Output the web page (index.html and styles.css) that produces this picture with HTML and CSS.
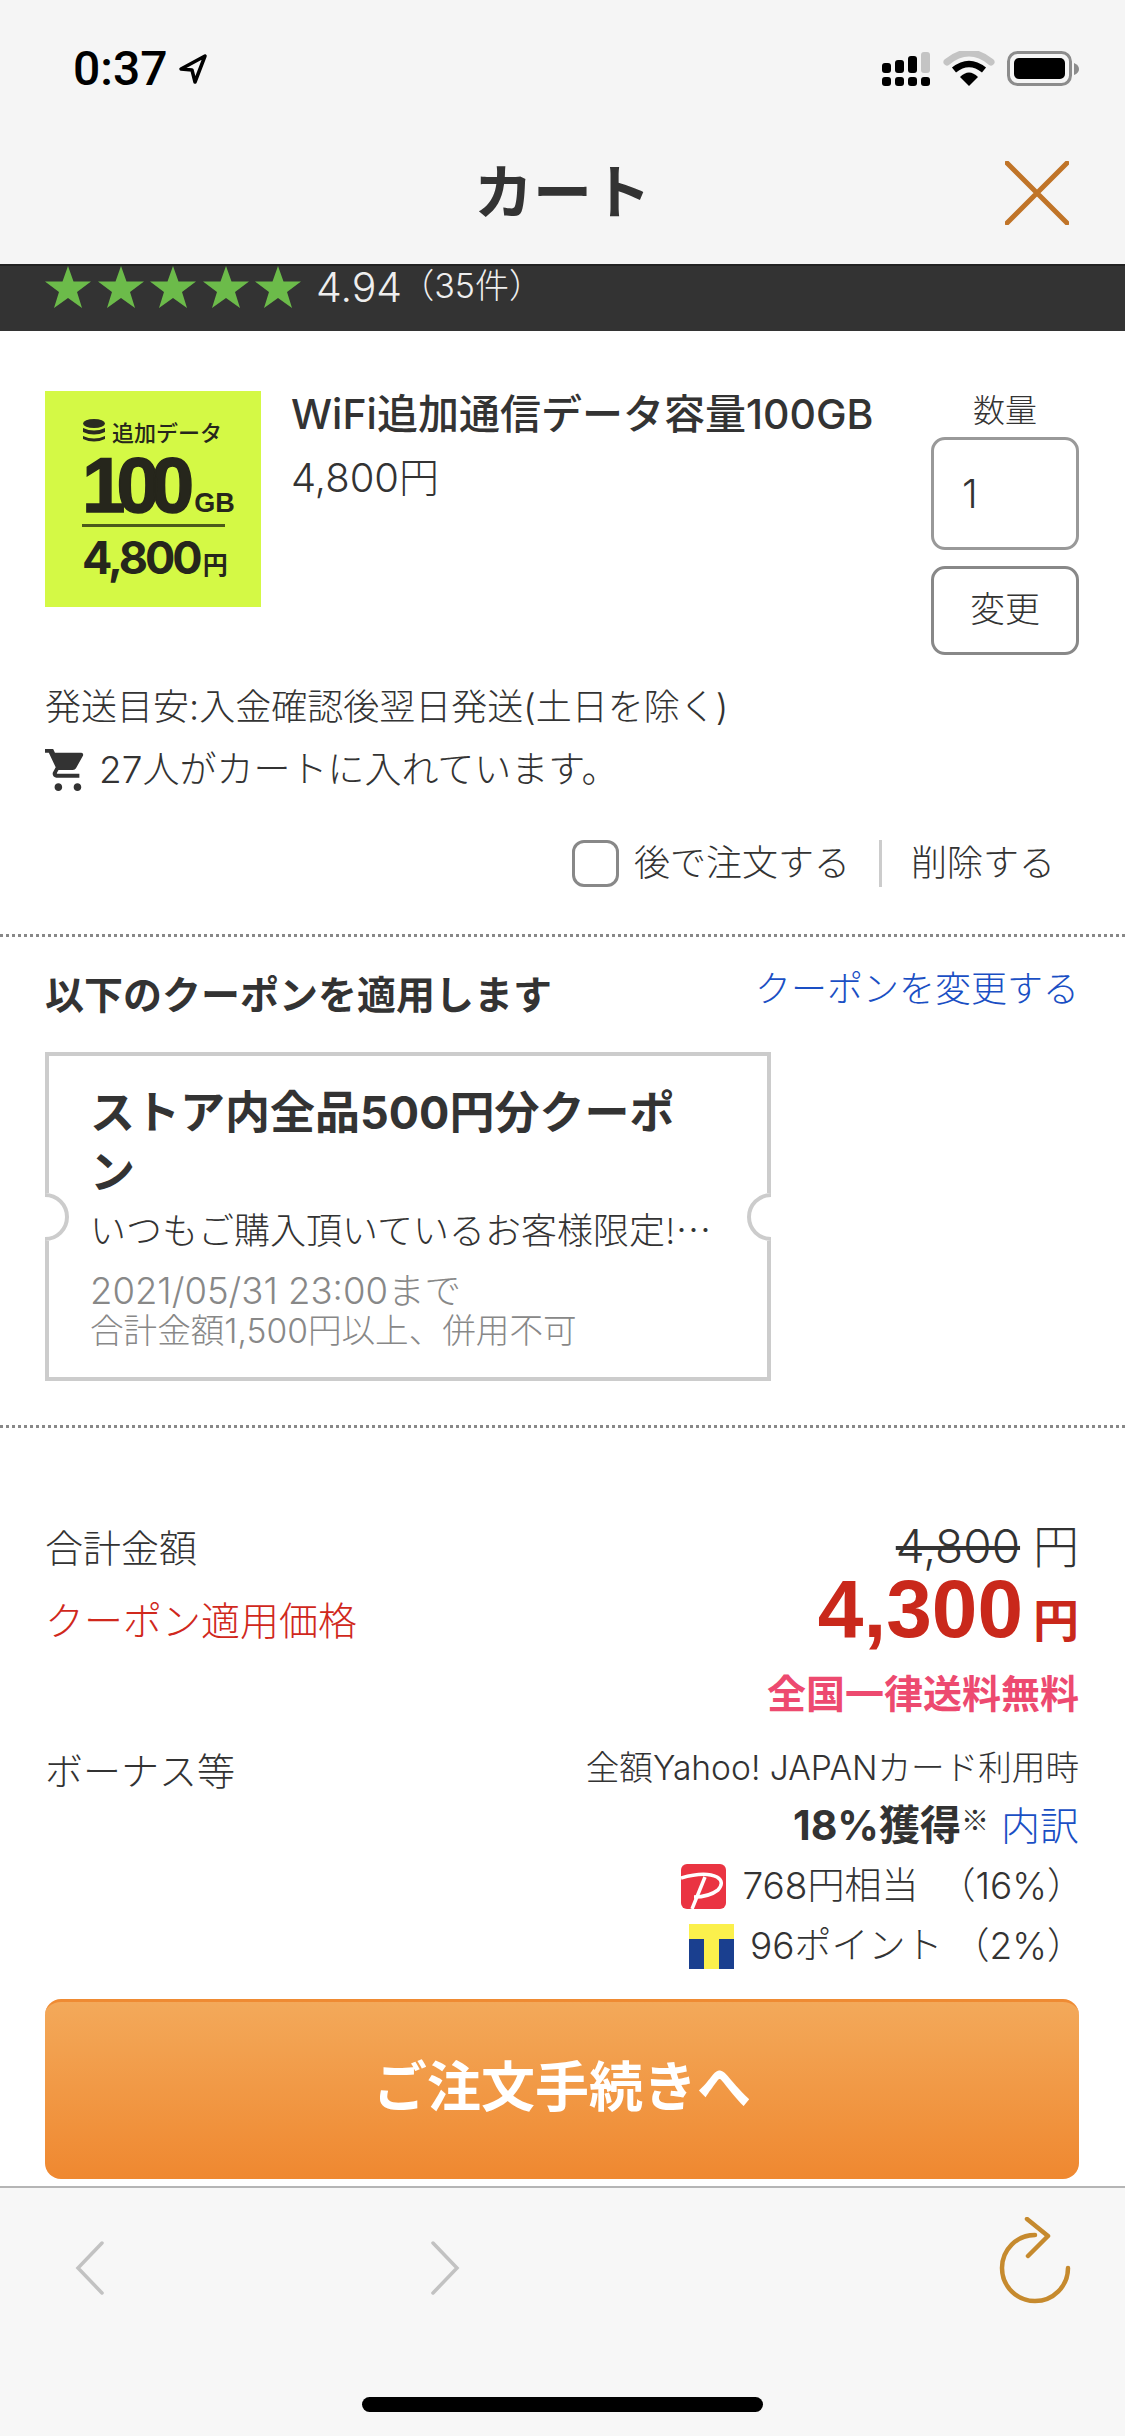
FILE: index.html
```html
<!DOCTYPE html>
<html lang="ja">
<head>
    <meta charset="utf-8">
    <title>カート</title>
    <link rel="stylesheet" href="styles.css">
</head>
<body>
    <header class="header">
        <div class="status-bar">
            <div class="status-time">
                <span>0:37</span>
                <svg class="status-arrow" viewBox="0 0 30 32" width="30" height="32">
                    <path d="M27 3 L3 16 L14 17 L17 29 Z" fill="none" stroke="#000" stroke-width="3.5" stroke-linejoin="round"/>
                </svg>
            </div>
            <svg class="status-icons" viewBox="0 0 200 36" width="200" height="36">
                <g fill="#000">
                    <rect x="0" y="12" width="9" height="10" rx="3"/>
                    <rect x="13" y="9" width="9" height="13" rx="3"/>
                    <rect x="26" y="5" width="9" height="17" rx="3"/>
                    <rect x="0" y="26" width="9" height="9" rx="3"/>
                    <rect x="13" y="26" width="9" height="9" rx="3"/>
                    <rect x="26" y="26" width="9" height="9" rx="3"/>
                    <rect x="39" y="26" width="9" height="9" rx="3"/>
                </g>
                <rect x="39" y="1" width="9" height="21" rx="3" fill="#c4c4c4"/>
                <path d="M65 11 Q87 -7 109 11" fill="none" stroke="#c4c4c4" stroke-width="7" stroke-linecap="round"/>
                <path d="M72 19 Q87 7 102 19" fill="none" stroke="#000" stroke-width="6.5"/>
                <path d="M78 26 Q87 17 96 26 L87 35 Z" fill="#000"/>
                <rect x="126.5" y="1.5" width="62" height="32" rx="9" fill="none" stroke="#8c8c8c" stroke-width="3"/>
                <rect x="132" y="7" width="51" height="21" rx="5" fill="#000"/>
                <path d="M192 12 Q197 14 197 18 Q197 22 192 24 Z" fill="#8c8c8c"/>
            </svg>
        </div>
        <div class="title-bar">
            <h1 class="title">カート</h1>
            <svg class="close-icon" viewBox="0 0 64 64" width="64" height="64">
                <path d="M2 2 L62 62 M62 2 L2 62" stroke="#c07428" stroke-width="5" stroke-linecap="round"/>
            </svg>
        </div>
    </header>

    <div class="rating-bar">
        <div class="stars">
            <svg viewBox="0 0 46 42" width="46" height="42"><path d="M23 0 L28.5 15.5 L46 15.5 L32 26 L37 42 L23 32 L9 42 L14 26 L0 15.5 L17.5 15.5 Z" fill="#6cbb4a"/></svg>
            <svg viewBox="0 0 46 42" width="46" height="42"><path d="M23 0 L28.5 15.5 L46 15.5 L32 26 L37 42 L23 32 L9 42 L14 26 L0 15.5 L17.5 15.5 Z" fill="#6cbb4a"/></svg>
            <svg viewBox="0 0 46 42" width="46" height="42"><path d="M23 0 L28.5 15.5 L46 15.5 L32 26 L37 42 L23 32 L9 42 L14 26 L0 15.5 L17.5 15.5 Z" fill="#6cbb4a"/></svg>
            <svg viewBox="0 0 46 42" width="46" height="42"><path d="M23 0 L28.5 15.5 L46 15.5 L32 26 L37 42 L23 32 L9 42 L14 26 L0 15.5 L17.5 15.5 Z" fill="#6cbb4a"/></svg>
            <svg viewBox="0 0 46 42" width="46" height="42"><path d="M23 0 L28.5 15.5 L46 15.5 L32 26 L37 42 L23 32 L9 42 L14 26 L0 15.5 L17.5 15.5 Z" fill="#6cbb4a"/></svg>
        </div>
        <span class="rating-score">4.94</span>
        <span class="rating-count">（35件）</span>
    </div>

    <main class="main">
        <section class="item">
            <div class="item-top">
                <div class="item-thumb">
                    <div class="thumb-label">
                        <svg viewBox="0 0 24 24" width="24" height="24">
                            <ellipse cx="12" cy="4.5" rx="11" ry="4.5" fill="#2b2b20"/>
                            <path d="M1 9 Q12 14 23 9 V13 Q12 18 1 13 Z M1 17 Q12 22 23 17 V20 Q12 25 1 20 Z" fill="#2b2b20"/>
                        </svg>
                        <span>追加データ</span>
                    </div>
                    <div class="thumb-size">100<span>GB</span></div>
                    <div class="thumb-price">4,800<span>円</span></div>
                </div>
                <div class="item-info">
                    <div class="item-name">WiFi追加通信データ容量100GB</div>
                    <div class="item-price">4,800円</div>
                </div>
                <div class="qty">
                    <div class="qty-label">数量</div>
                    <div class="qty-input">1</div>
                    <div class="qty-button">変更</div>
                </div>
            </div>
            <p class="ship-note">発送目安:入金確認後翌日発送(土日を除く)</p>
            <p class="cart-note">
                <svg viewBox="0 0 22 22" width="42" height="42">
                    <path d="M7 18c-1.1 0-1.99.9-1.99 2S5.9 22 7 22s2-.9 2-2-.9-2-2-2zM0 0v2h2l3.6 7.59-1.35 2.45c-.16.28-.25.61-.25.96 0 1.1.9 2 2 2h12v-2H6.42c-.14 0-.25-.11-.25-.25l.03-.12.9-1.63h7.45c.75 0 1.41-.41 1.75-1.03l3.58-6.47c.08-.14.12-.31.12-.48 0-.55-.45-1-1-1H5.21l-.94-2H0zm17 18c-1.1 0-1.99.9-1.99 2s.89 2 1.99 2 2-.9 2-2-.9-2-2-2z" fill="#333"/>
                </svg>
                <span>27人がカートに入れています。</span>
            </p>
            <div class="item-actions">
                <span class="checkbox"></span>
                <span class="later">後で注文する</span>
                <span class="remove">削除する</span>
            </div>
        </section>

        <section class="coupon-section">
            <div class="coupon-head">
                <h2 class="coupon-title">以下のクーポンを適用します</h2>
                <a class="link coupon-change">クーポンを変更する</a>
            </div>
            <div class="coupon">
                <span class="notch notch-left"></span>
                <span class="notch notch-right"></span>
                <div class="coupon-name">ストア内全品500円分クーポン</div>
                <div class="coupon-desc">いつもご購入頂いているお客様限定!…</div>
                <div class="coupon-terms">
                    <div class="coupon-date">2021/05/31 23:00まで</div>
                    <div>合計金額1,500円以上、併用不可</div>
                </div>
            </div>
        </section>

        <section class="summary">
            <div class="summary-row">
                <div class="summary-label total-label">合計金額</div>
                <div class="old-price"><s>4,800</s> 円</div>
            </div>
            <div class="summary-row">
                <div class="summary-label coupon-label">クーポン適用価格</div>
                <div class="new-price">4,300<span>円</span></div>
            </div>
            <div class="shipping">全国一律送料無料</div>
            <div class="summary-row bonus-row">
                <div class="summary-label bonus-label">ボーナス等</div>
                <div class="bonus">
                    <div class="bonus-note">全額Yahoo! JAPANカード利用時</div>
                    <div class="bonus-rate"><b>18%獲得</b><small>※</small><a class="link">内訳</a></div>
                    <div class="bonus-line">
                        <svg viewBox="0 0 45 45" width="45" height="45">
                            <rect width="45" height="45" rx="6" fill="#ea3442"/>
                            <path d="M0 14 Q24 7 36 13 Q44 18 37 26 Q28 33 13 33" fill="none" stroke="#fff" stroke-width="3.5"/>
                            <path d="M24 13 L11 45" stroke="#fff" stroke-width="3.5"/>
                        </svg>
                        <span class="bonus-amount">768円相当</span>
                        <span class="bonus-pct">（16%）</span>
                    </div>
                    <div class="bonus-line">
                        <svg viewBox="0 0 45 45" width="45" height="45">
                            <rect width="45" height="45" fill="#fbf04c"/>
                            <rect y="15" width="15" height="30" fill="#1a3f8f"/>
                            <rect x="30" y="15" width="15" height="30" fill="#1a3f8f"/>
                        </svg>
                        <span class="bonus-amount">96ポイント</span>
                        <span class="bonus-pct bonus-pct-short">（2%）</span>
                    </div>
                </div>
            </div>
            <div class="order-button">ご注文手続きへ</div>
        </section>
    </main>

    <footer class="toolbar">
        <div class="toolbar-icons">
            <svg class="back-icon" viewBox="0 0 30 54" width="30" height="54">
                <path d="M27 2 L3 27 L27 52" fill="none" stroke="#c2c2c2" stroke-width="3.5" stroke-linecap="round"/>
            </svg>
            <svg class="forward-icon" viewBox="0 0 30 54" width="30" height="54">
                <path d="M3 2 L27 27 L3 52" fill="none" stroke="#c2c2c2" stroke-width="3.5" stroke-linecap="round"/>
            </svg>
            <svg class="reload-icon" viewBox="0 0 72 88" width="72" height="88">
                <path d="M36 18 A33 33 0 1 0 69 51" fill="none" stroke="#c68a2e" stroke-width="4.5" stroke-linecap="round"/>
                <path d="M28 2 L49 19 L29 39" fill="none" stroke="#c68a2e" stroke-width="4.5" stroke-linecap="round" stroke-linejoin="round"/>
            </svg>
        </div>
        <div class="home-bar"></div>
    </footer>
</body>
</html>
```

FILE: styles.css
```css
*, *::before {
    box-sizing: border-box;
}

html, body {
    margin: 0;
    padding: 0;
}

body {
    width: 1125px;
    height: 2436px;
    overflow: hidden;
    display: flex;
    flex-direction: column;
    background-color: #fff;
    color: #333;
    font-family: Inter, "Noto Sans CJK JP", sans-serif;
    font-size: 36px;
    font-weight: 300;
}

.header {
    height: 264px;
    background-color: #f5f5f5;
    flex-shrink: 0;
}

.status-bar {
    height: 130px;
    padding: 50px 43px 0 73px;
    display: flex;
    justify-content: space-between;
    align-items: flex-start;
}

.status-time {
    display: flex;
    align-items: center;
    gap: 10px;
    color: #000;
    font-family: Roboto, sans-serif;
    font-weight: 500;
    font-size: 48px;
    line-height: 38px;
}

.status-icons {
    margin-top: 1px;
}

.title-bar {
    position: relative;
    display: flex;
    justify-content: center;
}

.title {
    margin: 31px 0 0;
    font-size: 59px;
    line-height: 64px;
    font-weight: 700;
    color: #333;
}

.close-icon {
    position: absolute;
    top: 31px;
    right: 56px;
}

.rating-bar {
    height: 67px;
    flex-shrink: 0;
    background-color: #333;
    border-top: 2px solid #222;
    padding: 0 0 0 45px;
    display: flex;
    align-items: flex-start;
    color: #eee;
}

.stars {
    display: flex;
    gap: 6.5px;
    margin-right: 15px;
}

.rating-score {
    font-size: 41px;
    line-height: 40px;
    margin-top: 1px;
}

.rating-count {
    font-size: 34px;
    line-height: 40px;
    margin-left: -2px;
}

.main {
    flex: 1;
    display: flex;
    flex-direction: column;
}

.item {
    padding: 60px 46px 0 45px;
    height: 606px;
    border-bottom: 3px dotted #888;
}

.item-top {
    display: flex;
}

.item-thumb {
    width: 216px;
    height: 216px;
    flex-shrink: 0;
    background-color: #d4f945;
    color: #26261c;
    padding: 25px 0 0 37px;
    font-weight: 700;
}

.thumb-label {
    display: flex;
    align-items: center;
    gap: 6px;
    font-family: "Noto Sans CJK JP", sans-serif;
    font-size: 22px;
    line-height: 30px;
    font-weight: 500;
}

.thumb-size {
    font-family: "Liberation Sans", sans-serif;
    font-size: 78px;
    line-height: 66px;
    letter-spacing: -9px;
    font-weight: 700;
    -webkit-text-stroke: 1.5px #26261c;
    margin-top: 6px;
    height: 75px;
    width: 143px;
    border-bottom: 3px solid #4c5a1a;
    white-space: nowrap;
}

.thumb-size span {
    font-size: 27px;
    letter-spacing: 0;
    margin-left: 9px;
    -webkit-text-stroke: 0;
}

.thumb-price {
    font-size: 45px;
    line-height: 50px;
    letter-spacing: -3px;
    font-weight: 700;
    margin-top: 6px;
    white-space: nowrap;
}

.thumb-price span {
    font-size: 25px;
    letter-spacing: 0;
    margin-left: 3px;
}

.item-info {
    flex: 1;
    padding-left: 30px;
}

.item-name {
    font-size: 41px;
    line-height: 46px;
    font-weight: 500;
    white-space: nowrap;
}

.item-price {
    margin-top: 17px;
    font-size: 40px;
    line-height: 48px;
}

.qty {
    width: 148px;
    flex-shrink: 0;
    display: flex;
    flex-direction: column;
    align-items: stretch;
}

.qty-label {
    text-align: center;
    font-size: 32px;
    line-height: 40px;
    margin-bottom: 6px;
}

.qty-input {
    height: 113px;
    border: 3px solid #999;
    border-radius: 14px;
    padding-left: 28px;
    font-size: 40px;
    line-height: 107px;
}

.qty-button {
    height: 89px;
    margin-top: 16px;
    border: 3px solid #888;
    border-radius: 14px;
    text-align: center;
    font-size: 35px;
    line-height: 80px;
}

.ship-note {
    margin: 28px 0 0;
    font-size: 36px;
    line-height: 48px;
    white-space: nowrap;
}

.cart-note {
    margin: 15px 0 0;
    display: flex;
    align-items: center;
    gap: 12px;
    font-size: 37px;
    line-height: 48px;
}

.item-actions {
    margin-top: 46px;
    display: flex;
    align-items: center;
    justify-content: flex-end;
    padding-right: 24px;
    font-size: 36px;
    line-height: 47px;
}

.checkbox {
    width: 47px;
    height: 47px;
    border: 3px solid #888;
    border-radius: 12px;
    margin-right: 15px;
}

.later {
    padding-right: 29px;
    border-right: 3px solid #ccc;
}

.remove {
    padding-left: 29px;
}

.coupon-section {
    height: 491px;
    padding: 30px 46px 0 45px;
    border-bottom: 3px dotted #888;
}

.coupon-head {
    display: flex;
    justify-content: space-between;
    align-items: flex-start;
}

.coupon-title {
    margin: 4px 0 0;
    font-size: 39px;
    line-height: 48px;
    font-weight: 700;
}

.link {
    color: #1a4fc4;
}

.coupon-change {
    font-size: 36px;
    line-height: 44px;
}

.coupon {
    position: relative;
    width: 726px;
    height: 329px;
    margin-top: 33px;
    border: 4px solid #ccc;
    padding: 27px 42px 0 41px;
}

.notch {
    position: absolute;
    top: 137px;
    width: 27px;
    height: 48px;
    background-color: #fff;
    overflow: hidden;
}

.notch::before {
    content: "";
    position: absolute;
    top: 0;
    width: 48px;
    height: 48px;
    border: 4px solid #ccc;
    border-radius: 50%;
}

.notch-left {
    left: -4px;
}

.notch-left::before {
    left: -24px;
}

.notch-right {
    right: -4px;
}

.notch-right::before {
    right: -24px;
}

.coupon-name {
    font-size: 45px;
    line-height: 60px;
    font-weight: 700;
    padding-right: 20px;
}

.coupon-desc {
    font-family: "Noto Sans CJK JP", sans-serif;
    font-size: 36px;
    line-height: 46px;
    white-space: nowrap;
    margin-top: 2px;
}

.coupon-terms {
    margin-top: 21px;
    font-size: 33.6px;
    line-height: 39px;
    color: #888;
}

.coupon-date {
    font-size: 36.5px;
}

.summary {
    flex: 1;
    padding: 91px 46px 0 45px;
}

.summary-row {
    display: flex;
    justify-content: space-between;
    align-items: flex-start;
}

.summary-label {
    font-size: 38px;
    line-height: 50px;
}

.total-label {
    line-height: 46px;
    margin-top: 6px;
}

.coupon-label {
    color: #d0281c;
    font-size: 39px;
    margin-top: 25px;
}

.bonus-label {
    margin-top: 1px;
}

.old-price {
    font-size: 46px;
    line-height: 48px;
    margin-top: 3px;
}

.new-price {
    color: #c9281b;
    font-family: "Liberation Sans", "Noto Sans CJK JP", sans-serif;
    font-size: 82px;
    line-height: 78px;
    font-weight: 700;
    margin-top: -1px;
}

.new-price span {
    font-family: "Noto Sans CJK JP", sans-serif;
    font-size: 46px;
    margin-left: 10px;
}

.shipping {
    text-align: right;
    color: #ed4a70;
    font-size: 39px;
    line-height: 48px;
    font-weight: 700;
    margin-top: 14px;
}

.bonus-row {
    margin-top: 27px;
}

.bonus {
    text-align: right;
}

.bonus-note {
    font-size: 33.6px;
    line-height: 46px;
}

.bonus-rate {
    font-size: 39px;
    line-height: 56px;
    margin: 0 0 7px;
}

.bonus-rate b {
    font-size: 41px;
    font-weight: 700;
}

.bonus-rate small {
    font-family: "Noto Sans CJK JP", sans-serif;
    font-size: 28px;
    vertical-align: 9px;
    margin-right: 12px;
}

.bonus-line {
    display: flex;
    justify-content: flex-end;
    align-items: center;
    font-size: 37px;
    line-height: 50px;
    margin-bottom: 10px;
}

.bonus-amount {
    margin-left: 16px;
}

.bonus-pct {
    margin: 0 -5px 0 20px;
}

.bonus-pct-short {
    margin-left: 10px;
}

.order-button {
    height: 180px;
    margin-top: 18px;
    border-top: 3px solid #ef8b33;
    border-radius: 16px;
    background: linear-gradient(#f3a95a, #ef8830);
    color: #fff;
    text-align: center;
    font-size: 54px;
    line-height: 172px;
    font-weight: 700;
}

.toolbar {
    height: 250px;
    flex-shrink: 0;
    background-color: #f7f7f7;
    border-top: 2px solid #b5b5b5;
    position: relative;
}

.toolbar-icons {
    display: flex;
    align-items: flex-start;
    padding: 29px 54px 0 75px;
}

.back-icon {
    margin-top: 24px;
}

.forward-icon {
    margin: 24px 0 0 325px;
}

.reload-icon {
    margin-left: auto;
}

.home-bar {
    position: absolute;
    left: 362px;
    bottom: 24px;
    width: 401px;
    height: 15px;
    border-radius: 8px;
    background-color: #000;
}
```
